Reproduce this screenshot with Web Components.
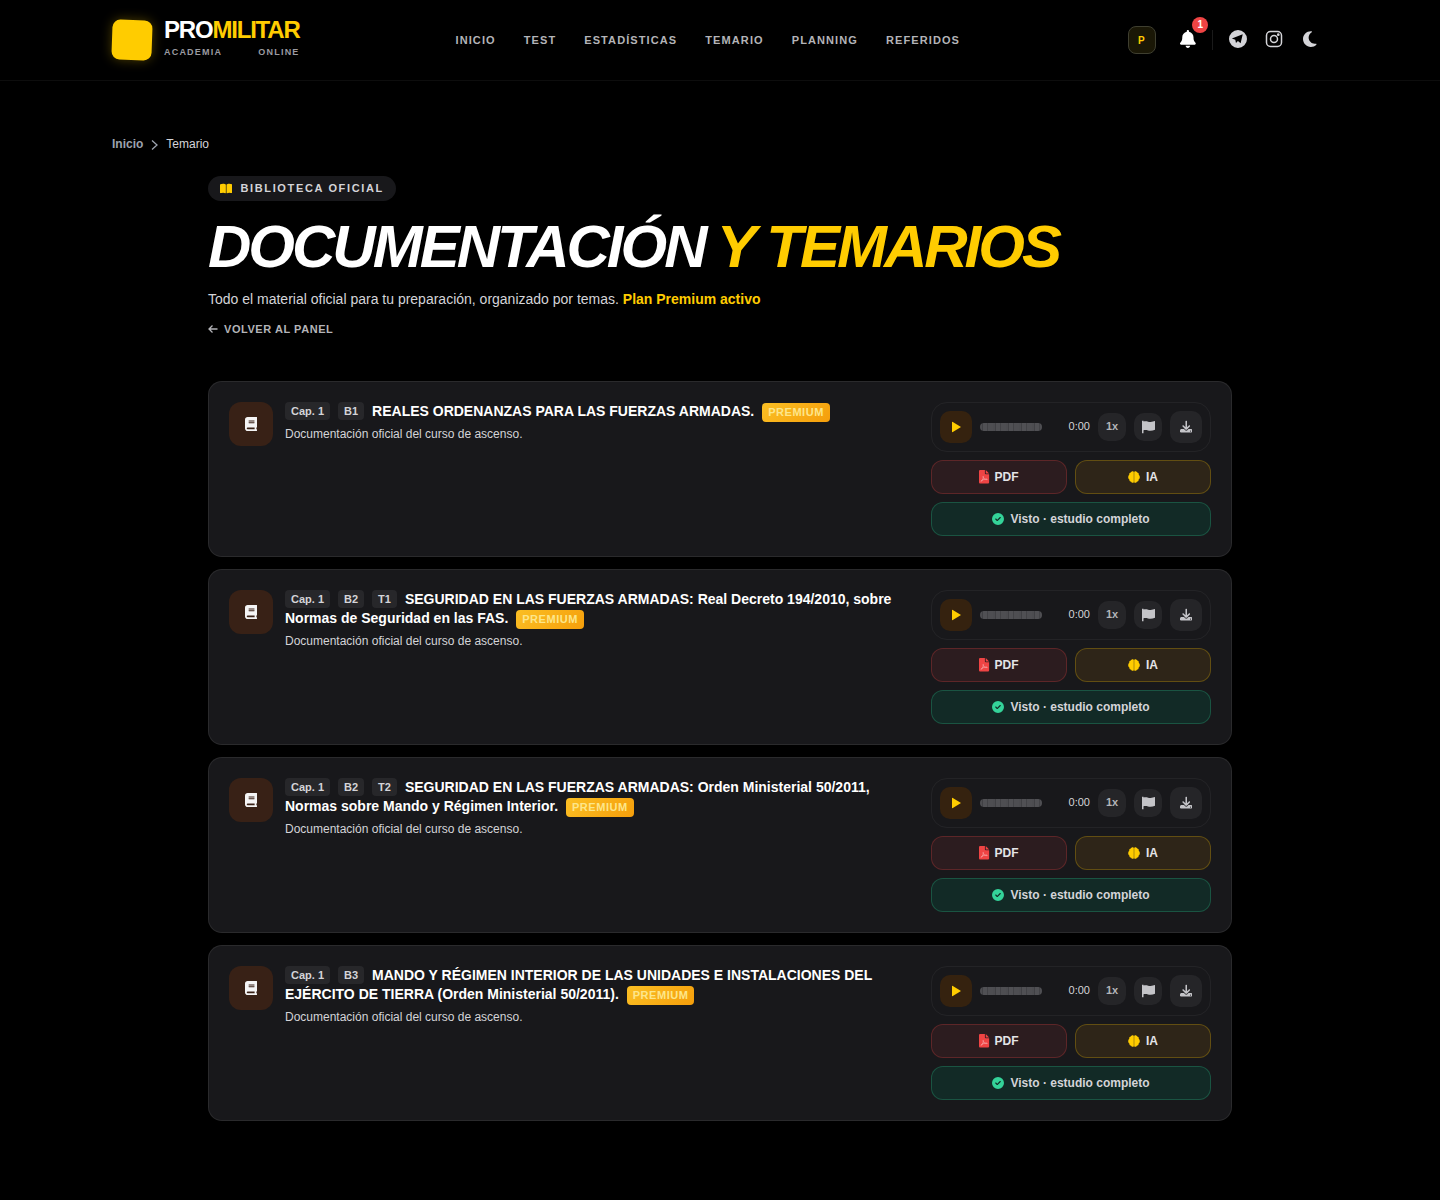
<!DOCTYPE html>
<html lang="es"><head><meta charset="utf-8"><title>Temario</title>
<style>
html,body{margin:0;background:#000;color:#fff;font-family:"Liberation Sans",Arial,sans-serif}
body{min-height:1200px}
main{display:block;width:1216px;margin:0 auto}
</style></head><body>
<pm-header></pm-header>
<main>
<pm-breadcrumb></pm-breadcrumb>
<pm-hero></pm-hero>
<pm-list>
<pm-card tags="Cap. 1|B1"><span slot="title">REALES ORDENANZAS PARA LAS FUERZAS ARMADAS.</span></pm-card>
<pm-card tags="Cap. 1|B2|T1"><span slot="title">SEGURIDAD EN LAS FUERZAS ARMADAS: Real Decreto 194/2010, sobre Normas de Seguridad en las FAS.</span></pm-card>
<pm-card tags="Cap. 1|B2|T2"><span slot="title">SEGURIDAD EN LAS FUERZAS ARMADAS: Orden Ministerial 50/2011, Normas sobre Mando y Régimen Interior.</span></pm-card>
<pm-card tags="Cap. 1|B3"><span slot="title">MANDO Y RÉGIMEN INTERIOR DE LAS UNIDADES E INSTALACIONES DEL EJÉRCITO DE TIERRA (Orden Ministerial 50/2011).</span></pm-card>
</pm-list>
</main>
<script>
const P={
bell:['0 0 448 512','M224 0c-17.7 0-32 14.3-32 32V51.2C119 66 64 130.6 64 208v18.8c0 47-17.3 92.4-48.5 127.6l-7.4 8.3c-8.4 9.4-10.4 22.9-5.3 34.4S19.4 416 32 416H416c12.6 0 24-7.4 29.2-18.9s3.1-25-5.3-34.4l-7.4-8.3C401.3 319.2 384 273.9 384 226.8V208c0-77.4-55-142-128-156.8V32c0-17.7-14.3-32-32-32zm45.3 493.3c12-12 18.7-28.3 18.7-45.3H224 160c0 17 6.7 33.3 18.7 45.3s28.3 18.7 45.3 18.7s33.3-6.7 45.3-18.7z'],
moon:['0 0 384 512','M223.5 32C100 32 0 132.3 0 256S100 480 223.5 480c60.6 0 115.5-24.2 155.8-63.4c5-4.9 6.3-12.5 3.1-18.7s-10.1-9.7-17-8.5c-9.8 1.7-19.8 2.6-30.1 2.6c-96.9 0-175.5-78.8-175.5-176c0-65.8 36-123.1 89.3-153.3c6.1-3.5 9.2-10.5 7.7-17.3s-7.3-11.9-14.3-12.5c-6.3-.5-12.6-.8-19-.8z'],
book:['0 0 448 512','M96 0C43 0 0 43 0 96V416c0 53 43 96 96 96H384h32c17.7 0 32-14.3 32-32s-14.3-32-32-32V384c17.7 0 32-14.3 32-32V32c0-17.7-14.3-32-32-32H384 96zm0 384H352v64H96c-17.7 0-32-14.3-32-32s14.3-32 32-32zm32-240c0-8.8 7.2-16 16-16H336c8.8 0 16 7.2 16 16s-7.2 16-16 16H144c-8.8 0-16-7.2-16-16zm16 48H336c8.8 0 16 7.2 16 16s-7.2 16-16 16H144c-8.8 0-16-7.2-16-16s7.2-16 16-16z'],
flag:['0 0 13 13','M0 0h1.500v13H0zM1.500 1c3-1 5 .5 7 .4 2-.1 3-.4 4.500-.9v8.800c-1.500.6-3 .9-4.500 1-2 .1-4-1.300-7-.5z'],
download:['0 0 512 512','M288 32c0-17.7-14.3-32-32-32s-32 14.3-32 32V274.7l-73.4-73.4c-12.5-12.5-32.8-12.5-45.3 0s-12.5 32.8 0 45.3l128 128c12.5 12.5 32.8 12.5 45.3 0l128-128c12.5-12.5 12.5-32.8 0-45.3s-32.8-12.5-45.3 0L288 274.7V32zM64 352c-35.3 0-64 28.7-64 64v32c0 35.3 28.7 64 64 64H448c35.3 0 64-28.7 64-64V416c0-35.3-28.7-64-64-64H346.5l-45.3 45.3c-25 25-65.5 25-90.5 0L165.5 352H64zm368 56a24 24 0 1 1 0 48 24 24 0 1 1 0-48z'],
check:['0 0 512 512','M256 512A256 256 0 1 0 256 0a256 256 0 1 0 0 512zM369 209L241 337c-9.4 9.4-24.6 9.4-33.9 0l-64-64c-9.4-9.4-9.4-24.6 0-33.9s24.6-9.4 33.9 0l47 47L335 175c9.4-9.4 24.6-9.4 33.9 0s9.4 24.6 0 33.9z'],
play:['0 0 9 11','M0 0L9 5.500L0 11z'],
brain:['0 0 512 512','M248 28v456c-10 14-26 22-46 22c-34 0-60-20-66-48c-42 0-76-30-76-70c0-8 1-14 4-20C32 352 8 312 8 256c0-42 16-74 46-96c-2-8-2-14-2-22c0-40 28-66 66-70C128 30 166 6 200 6c20 0 36 8 48 22zm16 0c12-14 28-22 48-22c34 0 72 24 82 62c38 4 66 30 66 70c0 8 0 14-2 22c30 22 46 54 46 96c0 56-24 96-56 112c3 6 4 12 4 20c0 40-34 70-76 70c-6 28-32 48-66 48c-20 0-36-8-46-22V28z'],
open:['0 0 576 512','M249.600 471.500c10.800 3.800 22.400-4.100 22.400-15.500V78.600c0-4.200-1.600-8.400-5-11C247.400 52 202.400 32 144 32C93.500 32 46.300 45.300 18.100 56.100C6.800 60.500 0 71.700 0 83.800V454.100c0 11.900 12.800 20.200 24.100 16.500C55.600 460.100 105.500 448 144 448c33.900 0 79 14 105.600 23.500zm76.800 0C353 462 398.100 448 432 448c38.500 0 88.400 12.100 119.900 22.600c11.300 3.800 24.100-4.600 24.100-16.500V83.800c0-12.100-6.800-23.300-18.100-27.600C529.700 45.300 482.500 32 432 32c-58.400 0-103.400 20-123 35.600c-3.300 2.600-5 6.800-5 11V456c0 11.400 11.700 19.300 22.400 15.500z']
};
const ic=(n,h,c)=>`<svg viewBox="${P[n][0]}" height="${h}" fill="${c}" aria-hidden="true" style="display:block;flex:none"><path d="${P[n][1]}"/></svg>`;
const pdf=`<svg viewBox="0 0 384 512" height="13.500" aria-hidden="true" style="display:block;flex:none"><path fill="#ef4444" d="M0 48C0 21.500 21.500 0 48 0H224V128c0 17.700 14.300 32 32 32H384V464c0 26.500-21.500 48-48 48H48c-26.500 0-48-21.500-48-48V48zM256 0L384 128H256V0z"/><path fill="none" stroke="#f4b0b0" stroke-width="22" stroke-linejoin="round" d="M78 440c30-16 70-90 88-150c8-30 0-60-12-50c-12 14 6 62 40 92c34 26 90 40 118 32c14-10-2-26-40-24c-50 2-120 26-172 56c-24 16-34 36-22 44z"/></svg>`;
function def(name,html){customElements.define(name,class extends HTMLElement{constructor(){super();this.attachShadow({mode:'open'});}connectedCallback(){this.shadowRoot.innerHTML=typeof html==='function'?html(this):html;}})}

def('pm-header',`<style>
:host{display:block;height:81px;box-sizing:border-box;border-bottom:1px solid rgba(255,255,255,.05)}
.in{width:1216px;height:80px;margin:0 auto;display:flex;align-items:center}
.logo{display:flex;align-items:center;gap:12px;width:188px;flex:none}
.sq{width:40px;height:40px;border-radius:8px;background:#ffcc00;transform:rotate(2deg);box-shadow:0 0 12px rgba(255,204,0,.3);flex:none}
.tx{margin-top:-4px}
.name{font-size:24px;font-weight:700;letter-spacing:-1.2px;line-height:24px;color:#fff}
.name b{color:#ffcc00}
.sub{display:flex;justify-content:space-between;font-size:9px;font-weight:700;line-height:12px;letter-spacing:1.2px;color:#9b9ba1;margin-top:4px}
nav{display:flex;gap:28px;margin-left:155.500px;font-size:11px;font-weight:700;letter-spacing:1.1px;color:#b4b4b8}
.r{margin-left:auto;display:flex;align-items:center}
.p{height:26px;width:24px;padding-right:2px;border:1px solid #3f3f30;border-radius:8px;background:#1a1706;color:#ffcc00;font-size:10px;font-weight:700;display:flex;align-items:center;justify-content:center;margin-right:24px}
.up{display:flex;align-items:center;margin-top:-3px}
.bell{position:relative;height:18px;margin-right:16px}
.bdg{position:absolute;top:-13px;left:12px;width:16px;height:16px;border-radius:50%;background:#ef4444;color:#fff;font-size:10px;font-weight:700;display:flex;align-items:center;justify-content:center}
.sep{width:1px;height:20px;background:rgba(255,255,255,.1);margin:2px 16px 0 0}
.ic{width:18px;height:18px;margin-right:18px;display:flex;align-items:center;justify-content:center}
</style><div class="in"><div class="logo"><div class="sq"></div><div class="tx"><div class="name">PRO<b>MILITAR</b></div><div class="sub"><span>ACADEMIA</span><span>ONLINE</span></div></div></div>
<nav><span>INICIO</span><span>TEST</span><span>ESTADÍSTICAS</span><span>TEMARIO</span><span>PLANNING</span><span>REFERIDOS</span></nav>
<div class="r"><div class="p">P</div><div class="up"><div class="bell">${ic('bell',18,'#fff')}<span class="bdg">1</span></div><div class="sep"></div>
<div class="ic"><svg viewBox="0 0 24 24" width="18" height="18" aria-hidden="true"><path fill="#d4d4d8" fill-rule="evenodd" d="M12 0a12 12 0 1 0 0 24a12 12 0 0 0 0-24zM18.300 5.500L3.800 11.200l4.600 1.800.9 4.300 2.600-2.600 3.600 3z"/></svg></div>
<div class="ic"><svg viewBox="0 0 18 18" width="18" height="18" fill="none" stroke="#d4d4d8" stroke-width="1.500" aria-hidden="true"><rect x="1.500" y="1.500" width="15" height="15" rx="4"/><circle cx="9" cy="9" r="3.500"/><circle cx="13.300" cy="4.700" r=".6" fill="#d4d4d8"/></svg></div>
<div class="ic" style="margin-right:9px">${ic('moon',18,'#d4d4d8')}</div></div></div></div>`);

def('pm-breadcrumb',`<style>:host{display:flex;align-items:center;margin-top:55px;height:16px;font-size:12px;color:#d4d4d8}
a{color:#9ca3af;font-weight:700}svg{margin:2px 8px 0 8px}</style><a>Inicio</a><svg width="7" height="10" viewBox="0 0 7 10" fill="none" stroke="#9ca3af" stroke-width="1.300"><path d="M1 .5l5 4.500-5 4.500"/></svg><span>Temario</span>`);

def('pm-hero',`<style>:host{display:block;margin:24px 96px 0}
.pill{display:inline-flex;align-items:center;gap:8px;height:25px;box-sizing:border-box;padding:0 12px 1px 12px;border-radius:13px;background:#18181b;font-size:11px;font-weight:700;letter-spacing:1.65px;color:#d4d4d8}
h1{margin:13px 0 0;font-size:60px;line-height:66px;font-style:italic;font-weight:700;letter-spacing:-3px;color:#fff}
h1 b{color:#ffcc00;margin-left:-1.500px}
p{margin:9px 0 0;font-size:14px;line-height:20px;color:#d4d4d8}
p b{color:#ffcc00}
.back{display:flex;align-items:center;gap:6px;margin-top:12px;font-size:11px;font-weight:700;letter-spacing:.55px;color:#b4b4b8;line-height:16px}
</style><div class="pill">${ic('open',11,'#ffcc00')}<span>BIBLIOTECA OFICIAL</span></div>
<h1>DOCUMENTACIÓN <b>Y TEMARIOS</b></h1>
<p>Todo el material oficial para tu preparación, organizado por temas. <b>Plan Premium activo</b></p>
<div class="back"><svg width="10" height="10" viewBox="0 0 10 10" fill="none" stroke="#b4b4b8" stroke-width="1.300"><path d="M9.500 5H1M4.500 1.500L1 5l3.500 3.500"/></svg><span>VOLVER AL PANEL</span></div>`);

def('pm-list',`<style>:host{display:flex;flex-direction:column;gap:12px;margin:44px 96px 0}</style><slot></slot>`);

def('pm-player',`<style>:host{display:flex;align-items:center;height:50px;box-sizing:border-box;padding:0 8px;border:1px solid rgba(255,255,255,.05);border-radius:16px}
.b{display:flex;align-items:center;justify-content:center;flex:none;border-radius:10px;background:#252528}
.b svg{transform:translateY(-.5px)}
.play{width:32px;height:32px;background:#35220f;margin-right:8px}
.w{width:62px;height:8px;margin-top:-1px;border-radius:4px;background:repeating-linear-gradient(90deg,#4c4c50 0 2px,#404044 2px 3px,#505054 3px 7px,#424246 7px 8px,#4e4e52 8px 13px);margin-right:26px}
.t{font-size:11px;line-height:13px;color:#d4d4d8;width:22px;margin:0 8px 2px 0;text-align:right;white-space:nowrap}
.s{width:28px;height:28px;box-sizing:border-box;font-size:11px;font-weight:700;color:#b4b4b8;margin-right:8px}
.x{padding-bottom:2px}
.d{width:32px;height:32px}
</style><div class="b play">${ic('play',11,'#ffcc00')}</div><div class="w"></div><div class="t">0:00</div><div class="b s x">1x</div><div class="b s">${ic('flag',13,'#c4c4c8')}</div><div class="b d">${ic('download',12.500,'#c4c4c8')}</div>`);

def('pm-btn',`<style>:host{display:flex;align-items:center;justify-content:center;gap:var(--g,6px);height:34px;box-sizing:border-box;border-radius:12px;border:1px solid var(--bd);background:var(--bg);font-size:12px;font-weight:700;color:var(--c,#e4e4e7)}</style><slot></slot>`);

def('pm-card',e=>{
 const tags=(e.getAttribute('tags')||'').split('|').map(t=>`<span class="tag">${t}</span>`).join('');
 return `<style>:host{display:flex;box-sizing:border-box;height:176px;padding:20px;border:1px solid rgba(255,255,255,.08);border-radius:14px;background:#18181b}
.ib{width:44px;height:44px;border-radius:12px;background:#382116;display:flex;align-items:center;justify-content:center;flex:none;margin-right:12px}
.m{width:618px;flex:none}
.ti{font-size:14px;font-weight:700;line-height:19px;color:#fff;margin:0}
.tag{display:inline-block;height:18px;line-height:18px;padding:0 6px;margin-right:8px;border-radius:4px;background:#27272a;font-size:11px;color:#d4d4d8;vertical-align:1px}
.pr{display:inline-block;height:19px;line-height:19px;padding:0 6px;margin-left:4px;border-radius:4px;background:linear-gradient(135deg,#fbbf24,#f59e0b);color:#fde68a;font-size:11px;letter-spacing:.55px;vertical-align:0}
.d{margin:4px 0 0;font-size:12px;line-height:16px;color:#d4d4d8}
.a{width:280px;margin-left:auto;display:flex;flex-direction:column;gap:8px;flex:none}
.g{display:grid;grid-template-columns:1fr 1fr;gap:8px}
</style><div class="ib">${ic('book',14,'#f4f4f5')}</div>
<div class="m"><div class="ti">${tags}<slot name="title"></slot> <span class="pr">PREMIUM</span></div><p class="d">Documentación oficial del curso de ascenso.</p></div>
<div class="a"><pm-player></pm-player><div class="g"><pm-btn style="--bd:rgba(239,68,68,.25);--bg:#2c1c1f;--g:5px">${pdf}PDF</pm-btn><pm-btn style="--bd:rgba(255,204,0,.25);--bg:#2e2518">${ic('brain',12,'#ffcc00')}IA</pm-btn></div>
<pm-btn style="--bd:rgba(52,211,153,.25);--bg:#122a26;--c:#d4d4d8">${ic('check',12,'#34d399')}Visto · estudio completo</pm-btn></div>`;
});
</script>
</body></html>
